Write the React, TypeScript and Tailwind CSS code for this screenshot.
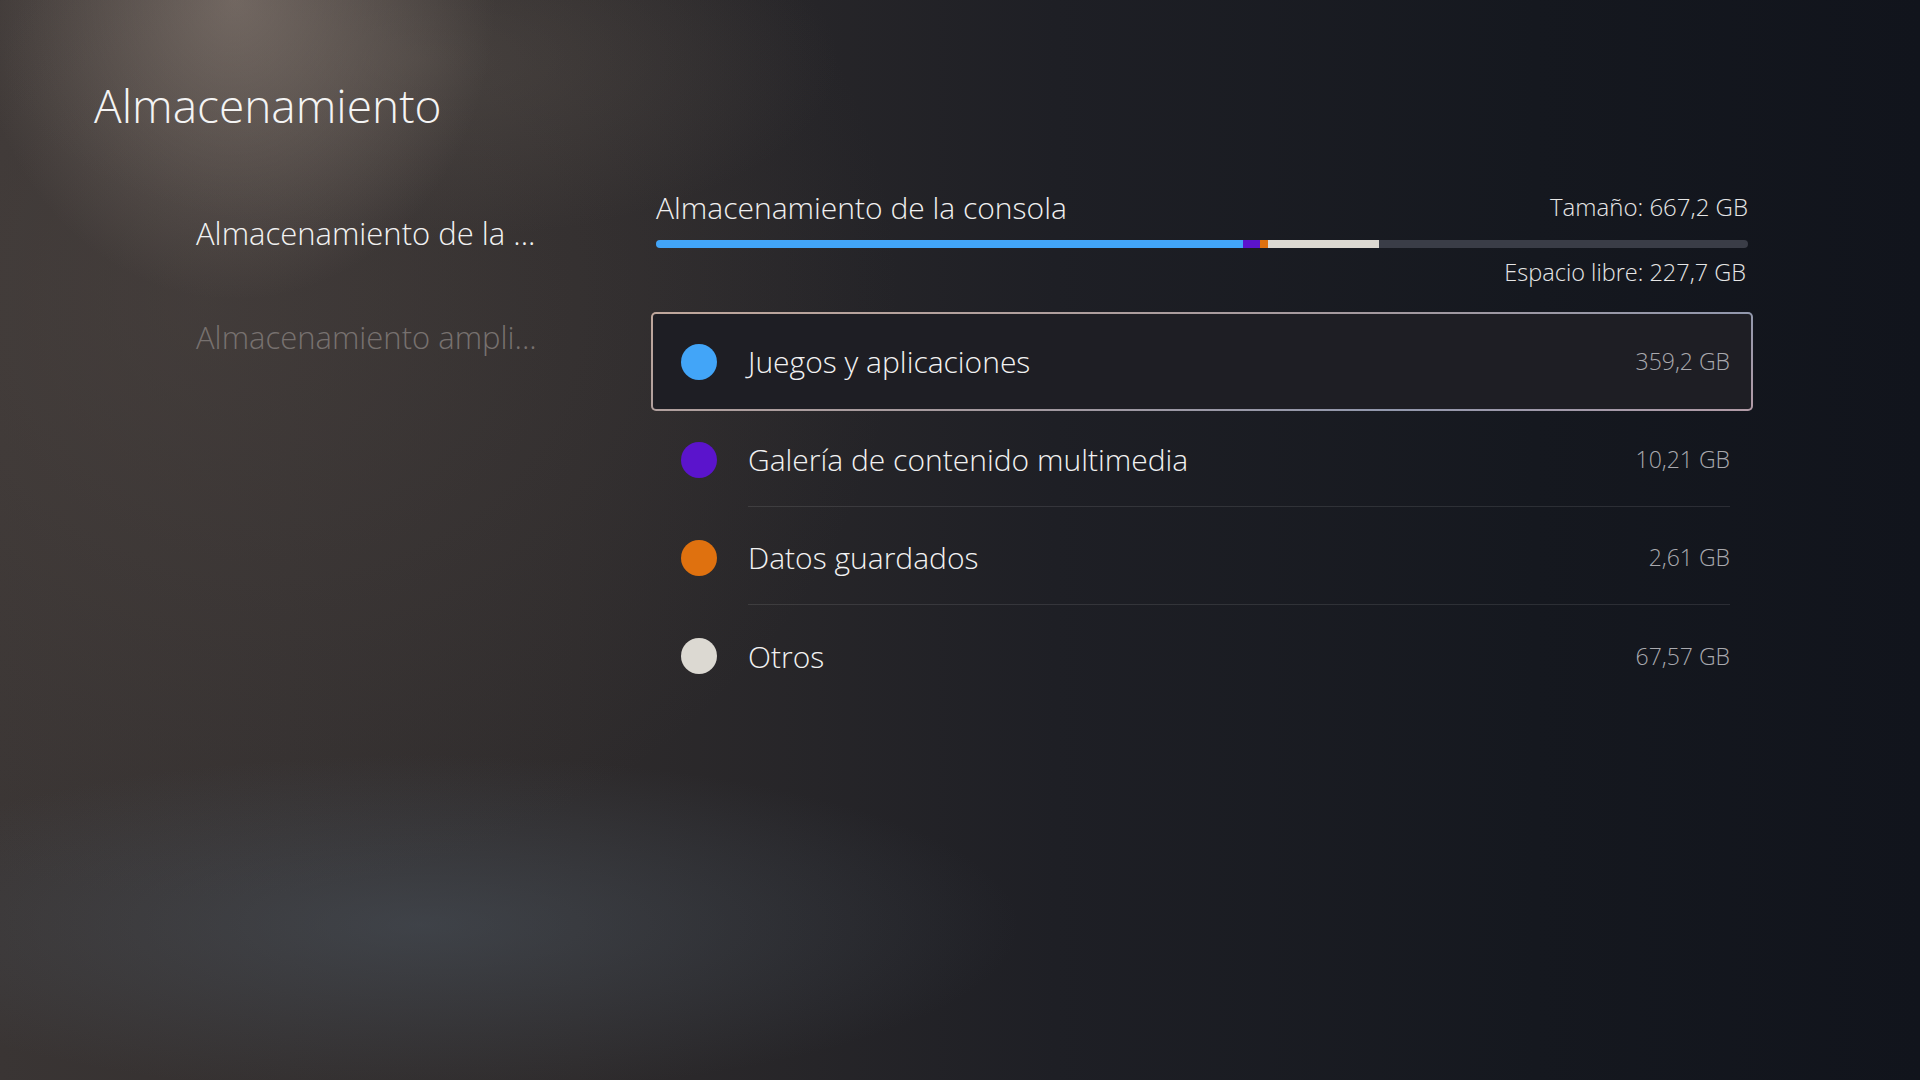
// Storage settings screen — console storage breakdown
type Category = {
  name: string
  size: string
  dot: string
}

const categories: Category[] = [
  { name: 'Juegos y aplicaciones', size: '359,2 GB', dot: 'bg-[#42a5f8]' },
  { name: 'Galería de contenido multimedia', size: '10,21 GB', dot: 'bg-[#5b14cc]' },
  { name: 'Datos guardados', size: '2,61 GB', dot: 'bg-[#df710f]' },
  { name: 'Otros', size: '67,57 GB', dot: 'bg-[#dcd9d2]' },
]

function UsageBar() {
  return (
    <div className="mx-[5px] mt-[15px] flex h-[8px] overflow-hidden rounded-full bg-[#3a3d47]">
      <div className="w-[587px] bg-[#42a5f8]" />
      <div className="w-[17px] bg-[#5b14cc]" />
      <div className="w-[8px] bg-[#df710f]" />
      <div className="w-[111px] bg-[#dcd9d2]" />
    </div>
  )
}

function CategoryRow({ item, selected, last }: { item: Category; selected: boolean; last: boolean }) {
  return (
    <div
      className={
        selected
          ? 'flex h-[99px] items-center rounded-[5px] border-2 border-transparent pl-[28px] pr-[21px] [background:linear-gradient(#1e1e24,#1e1e24)_padding-box,linear-gradient(165deg,#bfa79c,#a3999f_50%,#9298ad_75%,#b29ba6)_border-box]'
          : 'flex h-[98px] items-center border-2 border-transparent pl-[28px] pr-[21px]'
      }
    >
      <div className={`h-[36px] w-[36px] shrink-0 rounded-full ${item.dot}`} />
      <div
        className={`ml-[31px] flex h-full flex-1 items-center justify-between ${
          !selected && !last ? 'border-b border-white/10' : ''
        }`}
      >
        <span className="text-[30px] font-light text-[#f2f2f2]">{item.name}</span>
        <span className="text-[23px] font-light text-[#a9a9ae]">{item.size}</span>
      </div>
    </div>
  )
}

export default function App() {
  return (
    <div className="relative h-[1080px] w-[1920px] overflow-hidden font-['Open_Sans',sans-serif] text-white bg-[image:radial-gradient(ellipse_260px_300px_at_235px_0px,rgba(160,145,135,0.5),transparent),radial-gradient(ellipse_420px_180px_at_420px_60px,rgba(120,110,100,0.25),transparent),radial-gradient(ellipse_600px_170px_at_420px_925px,rgba(85,100,115,0.38),transparent),radial-gradient(ellipse_700px_600px_at_200px_300px,rgba(90,80,75,0.35),transparent),linear-gradient(90deg,#3a3534_0%,#2e2b2c_30%,#1e1f25_55%,#15181f_80%,#11141c_100%)]">
      <h1 className="pl-[94px] pt-[77px] text-[46px] font-light leading-[56px] text-[#f4f4f4]">Almacenamiento</h1>

      <div className="mt-[56px] flex">
        <nav className="flex w-[651px] flex-col gap-[64px] pl-[196px] pt-[24px]">
          <span className="text-[31px] font-light leading-[40px] text-[#f2f2f2]">Almacenamiento de la ...</span>
          <span className="text-[31px] font-light leading-[40px] text-[#77716f]">Almacenamiento ampli...</span>
        </nav>

        <section className="flex w-[1102px] flex-col">
          <div className="flex h-[36px] items-center justify-between px-[5px]">
            <span className="text-[30px] font-light text-[#f0f0f0]">Almacenamiento de la consola</span>
            <span className="text-[24px] font-light text-[#e6e6e6]">Tamaño: 667,2 GB</span>
          </div>
          <UsageBar />
          <div className="mt-[10px] flex h-[30px] items-center justify-end px-[7px]">
            <span className="text-[23.5px] font-light text-[#e6e6e6]">Espacio libre: 227,7 GB</span>
          </div>

          <div className="mt-[24px] flex flex-col">
            {categories.map((c, i) => (
              <CategoryRow key={c.name} item={c} selected={i === 0} last={i === categories.length - 1} />
            ))}
          </div>
        </section>
      </div>
    </div>
  )
}
